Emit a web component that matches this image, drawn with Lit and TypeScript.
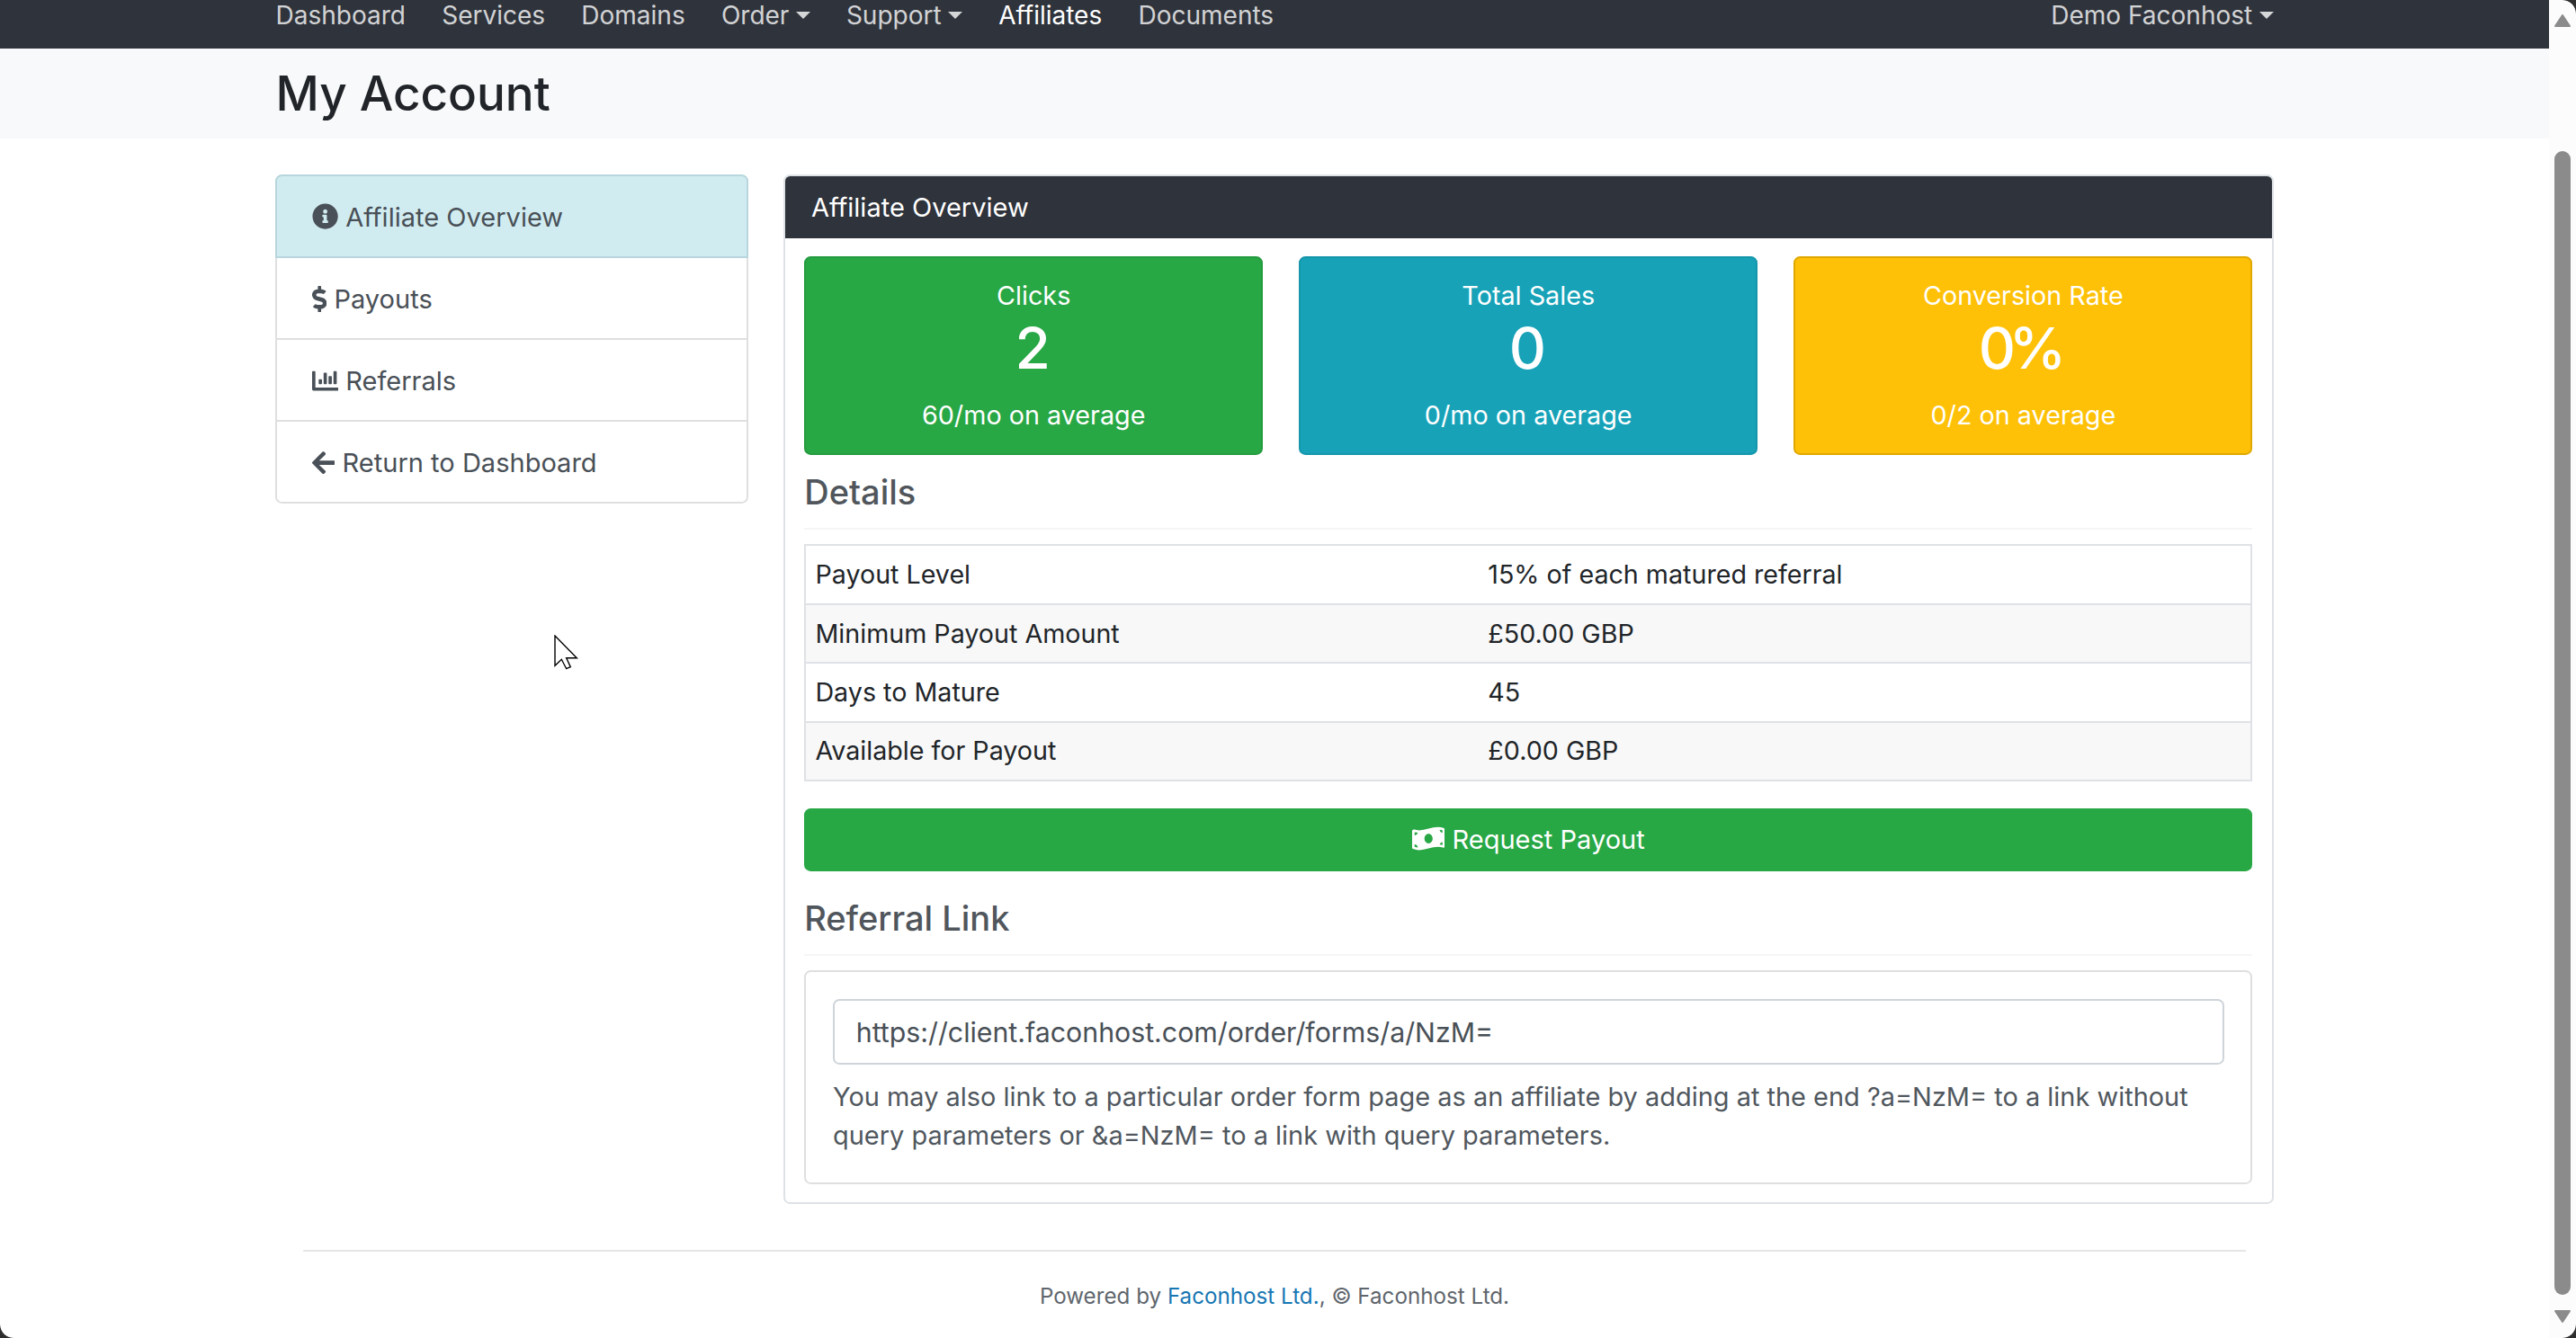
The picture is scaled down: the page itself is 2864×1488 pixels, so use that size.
import { LitElement, html, css, svg } from "lit";
import { customElement } from "lit/decorators.js";

const icons = {
  info: { w: 512, d: "M256 8C119.043 8 8 119.083 8 256c0 136.997 111.043 248 248 248s248-111.003 248-248C504 119.083 392.957 8 256 8zm0 110c23.196 0 42 18.804 42 42s-18.804 42-42 42-42-18.804-42-42 18.804-42 42-42zm56 254c0 6.627-5.373 12-12 12h-88c-6.627 0-12-5.373-12-12v-24c0-6.627 5.373-12 12-12h12v-64h-12c-6.627 0-12-5.373-12-12v-24c0-6.627 5.373-12 12-12h64c6.627 0 12 5.373 12 12v100h12c6.627 0 12 5.373 12 12v24z" },
  dollar: { w: 288, d: "M209.2 233.4l-108-31.6C88.7 198.2 80 186.5 80 173.5c0-16.3 13.2-29.5 29.5-29.5h66.3c12.2 0 24.2 3.7 34.2 10.5 6.1 4.1 14.3 3.1 19.5-2l34.8-34c7.1-6.9 6.1-18.4-1.8-24.5C238 74.8 207.4 64.1 176 64V16c0-8.8-7.2-16-16-16h-32c-8.8 0-16 7.2-16 16v48h-2.5C45.8 64-5.4 118.7.5 183.6c4.2 46.1 39.4 83.6 83.8 96.6l102.5 30c12.5 3.7 21.2 15.3 21.2 28.3 0 16.3-13.2 29.5-29.5 29.5h-66.3C100 368 88 364.3 78 357.5c-6.1-4.1-14.3-3.1-19.5 2l-34.8 34c-7.1 6.9-6.1 18.4 1.8 24.5 24.5 19.2 55.1 29.9 86.5 30v48c0 8.8 7.2 16 16 16h32c8.8 0 16-7.2 16-16v-48.2c46.6-.9 90.3-28.6 105.7-72.7 21.5-61.6-14.6-124.8-72.5-141.7z" },
  chart: { w: 512, d: "M332.8 320h38.4c6.4 0 12.8-6.4 12.8-12.8V172.8c0-6.4-6.4-12.8-12.8-12.8h-38.4c-6.4 0-12.8 6.4-12.8 12.8v134.4c0 6.4 6.4 12.8 12.8 12.8zm96 0h38.4c6.4 0 12.8-6.4 12.8-12.8V76.8c0-6.4-6.4-12.8-12.8-12.8h-38.4c-6.4 0-12.8 6.4-12.8 12.8v230.4c0 6.4 6.4 12.8 12.8 12.8zm-288 0h38.4c6.4 0 12.8-6.4 12.8-12.8v-70.4c0-6.4-6.4-12.8-12.8-12.8h-38.4c-6.4 0-12.8 6.4-12.8 12.8v70.4c0 6.4 6.4 12.8 12.8 12.8zm96 0h38.4c6.4 0 12.8-6.4 12.8-12.8V108.8c0-6.4-6.4-12.8-12.8-12.8h-38.4c-6.4 0-12.8 6.4-12.8 12.8v198.4c0 6.4 6.4 12.8 12.8 12.8zM496 384H64V80c0-8.84-7.16-16-16-16H16C7.16 64 0 71.16 0 80v336c0 17.67 14.33 32 32 32h464c8.84 0 16-7.16 16-16v-32c0-8.84-7.16-16-16-16z" },
  back: { w: 448, d: "M257.5 445.1l-22.2 22.2c-9.4 9.4-24.6 9.4-33.9 0L7 273c-9.4-9.4-9.4-24.6 0-33.9L201.4 44.7c9.4-9.4 24.6-9.4 33.9 0l22.2 22.2c9.5 9.5 9.3 25-.4 34.3L136.6 216H424c13.3 0 24 10.7 24 24v32c0 13.3-10.7 24-24 24H136.6l120.5 114.8c9.8 9.3 10 24.8.4 34.3z" },
  money: { w: 640, d: "M621.16 54.46C582.37 38.19 543.55 32 504.75 32c-123.17-.01-246.33 62.34-369.5 62.34-30.89 0-61.76-3.92-92.65-13.72-3.47-1.1-6.95-1.62-10.35-1.62C15.04 79 0 92.32 0 110.81v317.26c0 12.63 7.23 24.6 18.84 29.46C57.63 473.81 96.45 480 135.25 480c123.17 0 246.34-62.35 369.51-62.35 30.89 0 61.76 3.92 92.65 13.72 3.47 1.1 6.95 1.62 10.35 1.62 17.21 0 32.25-13.32 32.25-31.81V83.93c-.01-12.64-7.24-24.6-18.85-29.47zM48 132.22c20.12 5.04 41.12 7.57 62.72 8.93C104.84 170.54 79 192.69 48 192.69v-60.47zm0 285v-47.78c34.37 0 62.18 27.27 63.71 61.4-22.53-1.81-43.59-6.31-63.71-13.62zM320 352c-44.19 0-80-42.99-80-96 0-53.02 35.82-96 80-96s80 42.98 80 96c0 53.03-35.83 96-80 96zm272 27.78c-17.52-4.39-35.71-6.85-54.32-8.44 5.87-26.08 27.5-45.88 54.32-49.28v57.72zm0-236.11c-30.89-3.91-54.86-29.7-55.81-61.55 19.54 2.17 38.09 6.23 55.81 12.66v48.89z" },
};

const icon = (name: keyof typeof icons) => {
  const i = icons[name];
  return html`<svg class="fa" viewBox="0 0 ${i.w} 512" width=${(i.w / 512) * 16} height="16">${svg`<path fill="currentColor" d=${i.d}></path>`}</svg>`;
};

const navLeft = [
  { label: "Dashboard" },
  { label: "Services" },
  { label: "Domains" },
  { label: "Order", caret: true },
  { label: "Support", caret: true },
  { label: "Affiliates", active: true },
  { label: "Documents" },
];

const sideLinks: { label: string; icon: keyof typeof icons; active?: boolean }[] = [
  { label: "Affiliate Overview", icon: "info", active: true },
  { label: "Payouts", icon: "dollar" },
  { label: "Referrals", icon: "chart" },
  { label: "Return to Dashboard", icon: "back" },
];

const stats = [
  { cls: "green", title: "Clicks", value: "2", note: "60/mo on average" },
  { cls: "teal", title: "Total Sales", value: "0", note: "0/mo on average" },
  { cls: "yellow", title: "Conversion Rate", value: "0%", note: "0/2 on average" },
];

const details = [
  ["Payout Level", "15% of each matured referral"],
  ["Minimum Payout Amount", "£50.00 GBP"],
  ["Days to Mature", "45"],
  ["Available for Payout", "£0.00 GBP"],
];

@customElement("app-root")
export class AppRoot extends LitElement {
  static styles = css`
    :host {
      display: flex;
      position: relative;
      height: 1488px;
      overflow: hidden;
      background: #fff;
      color: #495057;
      font-family: Inter, "Liberation Sans", sans-serif;
      font-size: 15.9px;
      line-height: 24px;
    }
    * {
      box-sizing: border-box;
    }

    /* the screenshot was taken at 1.8265x, everything below is in page px.
       1.1px borders land on 2 device px, 1px would floor to 1 */
    .page {
      flex: 1;
      min-width: 0;
      zoom: 1.8265;
    }
    .wrap {
      width: 1216px;
      margin: 0 auto;
    }

    .nav {
      height: 29.3px;
      background: #2f333b;
      overflow: hidden;
      display: flex;
      align-items: flex-end;
      padding-bottom: 7.6px;
    }
    .nav .wrap {
      display: flex;
      gap: 22px;
      font-size: 15.35px;
      color: rgba(255, 255, 255, 0.8);
    }
    .nav .active {
      color: #fff;
    }
    .nav .push {
      margin-left: auto;
    }
    .caret::after {
      content: "";
      display: inline-block;
      margin-left: 4px;
      vertical-align: 3px;
      border-top: 4.8px solid;
      border-left: 4.8px solid transparent;
      border-right: 4.8px solid transparent;
    }

    .head {
      height: 55px;
      background: #f8f9fa;
      display: flex;
      align-items: center;
    }
    .head h1 {
      margin: 0;
      font-size: 29px;
      font-weight: 500;
      line-height: 34px;
      color: #212529;
    }

    .columns {
      display: flex;
      gap: 21.5px;
      align-items: flex-start;
      padding-top: 22px;
    }

    .side {
      width: 287.5px;
      flex: none;
    }
    .side a {
      display: block;
      height: 49.8px;
      padding: 13.2px 20px 0 21px;
      border: 1.1px solid #dfdfdf;
      border-top: none;
    }
    .side a:first-child {
      height: 51px;
      padding-top: 13px;
      border-top: 1.1px solid #dfdfdf;
      border-radius: 4px 4px 0 0;
    }
    .side a:last-child {
      border-radius: 0 0 4px 4px;
    }
    .side a.active {
      background: #d1ecf1;
      border-color: #b8d6dd;
    }
    .fa {
      display: inline-block;
      vertical-align: -2px;
    }

    .card {
      width: 907.3px;
      flex: none;
      border: 1.1px solid #dee2e6;
      border-radius: 4px;
      overflow: hidden;
      margin-bottom: 28px;
    }
    .card-head {
      margin: -1.1px -1.1px 0;
      height: 39px;
      padding: 8px 17px;
      background: #2f333b;
      color: #fff;
    }
    .card-body {
      padding: 11px 11.9px 10.5px 11.7px;
    }

    .stats {
      display: grid;
      grid-template-columns: repeat(3, 1fr);
      gap: 22px;
    }
    .stat {
      height: 121px;
      padding: 10.8px 11px;
      border: 1.1px solid;
      border-radius: 4px;
      color: #fff;
      font-size: 15.75px;
      text-align: center;
    }
    .stat .value {
      font-size: 35px;
      font-weight: 500;
      letter-spacing: -4px;
      line-height: 39px;
      margin-bottom: 9.6px;
      padding-right: 5px;
    }
    .green {
      background: #28a745;
      border-color: #259b40;
    }
    .teal {
      background: #17a2b8;
      border-color: #1596ab;
    }
    .yellow {
      background: #ffc107;
      border-color: #e0a800;
    }

    h2 {
      margin: 0 0 9.2px;
      height: 45px;
      padding-top: 1.5px;
      display: flex;
      align-items: center;
      border-bottom: 1.1px solid #f5f5f5;
      font-size: 20.8px;
      font-weight: 500;
      color: #50565c;
    }

    table {
      width: 100%;
      border-collapse: collapse;
      table-layout: fixed;
      color: #212529;
      font-size: 15.7px;
      border-left: 1.1px solid #dee2e6;
      border-right: 1.1px solid #dee2e6;
    }
    td {
      height: 35.8px;
      padding: 0 5.6px;
      border-top: 1.1px solid #dee2e6;
      border-bottom: 1.1px solid #dee2e6;
    }
    td:first-child {
      width: 410px;
    }
    tr:nth-child(even) td {
      background: #f8f8f8;
    }

    .btn {
      display: block;
      height: 38px;
      margin: 16.6px 0 0;
      padding-top: 7px;
      border-radius: 4px;
      background: #28a745;
      color: #fff;
      text-align: center;
    }

    .link-head {
      margin-top: 6.5px;
      margin-bottom: 9px;
    }
    .link-box {
      border: 1.1px solid #dfdfdf;
      border-radius: 4px;
      padding: 16.3px 16.3px 17.3px;
    }
    .input {
      height: 40px;
      padding: 7.8px 13px 0;
      border: 1.1px solid #ced4da;
      border-radius: 4px;
      background: #fff;
      font-size: 16.6px;
    }
    .link-box p {
      margin: 7.5px 0 0;
      line-height: 23.6px;
      font-size: 15.85px;
      color: #50575e;
    }

    .foot {
      width: 1183px;
      margin: 0 auto;
      border-top: 1.1px solid #e5e5e5;
      padding-top: 17.2px;
      font-size: 13.25px;
      line-height: 21px;
      text-align: center;
      color: #60666d;
    }
    .foot a {
      color: #1877b3;
    }

    .scroll {
      flex: none;
      width: 30px;
      height: 100%;
      background: #fcfcfc;
      display: flex;
      flex-direction: column;
      align-items: center;
      padding: 16px 0 17px;
    }
    .thumb {
      width: 18px;
      height: 1273px;
      margin: 138px 0 17px;
      border-radius: 9px;
      background: #8b8b8b;
    }
    .arrow {
      width: 18px;
      height: 14px;
      display: block;
      flex: none;
    }

    .corner {
      position: absolute;
      width: 15px;
      height: 15px;
    }
    .tr {
      top: 0;
      right: 0;
      background: radial-gradient(circle at 0 100%, transparent 14.4px, #2e2e2e 15.2px);
    }
    .br {
      bottom: 0;
      right: 0;
      background: radial-gradient(circle at 0 0, transparent 14.4px, #2e2e2e 15.2px);
    }
    .bl {
      bottom: 0;
      left: 0;
      background: radial-gradient(circle at 100% 0, transparent 14.4px, #2e2e2e 15.2px);
    }
    .cursor {
      position: absolute;
      left: 616px;
      top: 706px;
      width: 28px;
      height: 40px;
    }
  `;

  render() {
    return html`
      <div class="page">
        <div class="nav">
          <div class="wrap">
            ${navLeft.map(
              (n) => html`<a class="${n.caret ? "caret" : ""} ${n.active ? "active" : ""}">${n.label}</a>`
            )}
            <a class="push caret">Demo Faconhost</a>
          </div>
        </div>
        <div class="head">
          <div class="wrap"><h1>My Account</h1></div>
        </div>
        <div class="wrap columns">
          <div class="side">
            ${sideLinks.map(
              (s) => html`<a class=${s.active ? "active" : ""}>${icon(s.icon)} ${s.label}</a>`
            )}
          </div>
          <div class="card">
            <div class="card-head">Affiliate Overview</div>
            <div class="card-body">
              <div class="stats">
                ${stats.map(
                  (s) => html`<div class="stat ${s.cls}">
                    <div>${s.title}</div>
                    <div class="value">${s.value}</div>
                    <div>${s.note}</div>
                  </div>`
                )}
              </div>
              <h2>Details</h2>
              <table>
                ${details.map((r) => html`<tr><td>${r[0]}</td><td>${r[1]}</td></tr>`)}
              </table>
              <a class="btn">${icon("money")} Request Payout</a>
              <h2 class="link-head">Referral Link</h2>
              <div class="link-box">
                <div class="input">https://client.faconhost.com/order/forms/a/NzM=</div>
                <p>
                  You may also link to a particular order form page as an affiliate by adding at
                  the end ?a=NzM= to a link without query parameters or &amp;a=NzM= to a link with
                  query parameters.
                </p>
              </div>
            </div>
          </div>
        </div>
        <div class="foot">Powered by <a>Faconhost Ltd.</a>, © Faconhost Ltd.</div>
      </div>
      <div class="scroll">
        <svg class="arrow" viewBox="0 0 18 14"><path fill="#8b8b8b" stroke="#8b8b8b" stroke-width="2" stroke-linejoin="round" d="M9 1 17 13H1z"></path></svg>
        <div class="thumb"></div>
        <svg class="arrow" viewBox="0 0 18 14"><path fill="#8b8b8b" stroke="#8b8b8b" stroke-width="2" stroke-linejoin="round" d="M1 1H17L9 13z"></path></svg>
      </div>
      <svg class="cursor" viewBox="0 0 28 40"><path fill="#fff" stroke="#000" stroke-width="1.4" d="M1 1V34.3L8.3 27.3 13.7 37.7 18.3 35.7 13.7 25.7H25.3z"></path></svg>
      <div class="corner tr"></div>
      <div class="corner br"></div>
      <div class="corner bl"></div>
    `;
  }
}
